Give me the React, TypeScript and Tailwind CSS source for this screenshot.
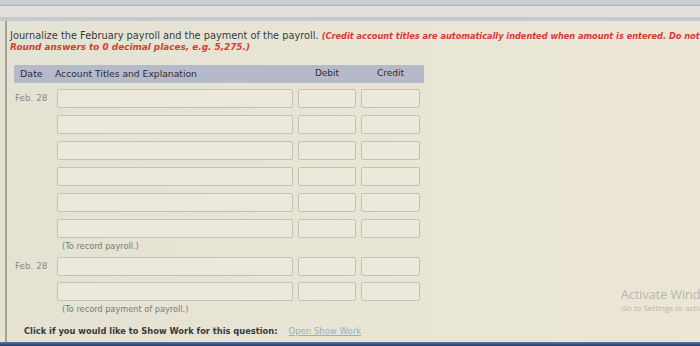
import React from 'react';

const FONT = { fontFamily: '"DejaVu Sans", Verdana, sans-serif' };

function Box({ w }: { w: string }) {
  return <div className={`h-[19px] ${w} rounded-[2px] border border-[#c3c2b8] bg-[#ebe9dc]`} />;
}

function EntryRow({ date }: { date?: string }) {
  return (
    <div className="grid grid-cols-[38px_236px_58px_59px] gap-x-[5px] items-center">
      <div className="pl-[1px] text-[8.8px] text-[#8a8a82]">{date}</div>
      <Box w="w-[236px]" />
      <Box w="w-[58px]" />
      <Box w="w-[59px]" />
    </div>
  );
}

function Note({ text }: { text: string }) {
  return (
    <div className="grid grid-cols-[38px_236px] gap-x-[5px] h-[14px] items-center">
      <div />
      <div className="pl-[5px] text-[8.2px] text-[#7a7a74] whitespace-nowrap">{text}</div>
    </div>
  );
}

export default function App() {
  return (
    <div
      className="relative w-[700px] h-[346px] overflow-hidden flex flex-col bg-gradient-to-r from-[#e4e2d3] via-[#e8e5d5] to-[#ebe6d6]"
      style={FONT}
    >
      {/* browser chrome strips */}
      <div className="h-[6px] bg-[#c9ccd3] border-b border-[#aeb2ba]" />
      <div className="h-[11px] bg-[#e2e1d9]" />
      <div className="h-[4px] bg-[#c6c9cf]" />

      <div className="flex-1 ml-[5px] border-l-[2px] border-[#a4a39c] pl-[3px] pt-[9px]">
        {/* instructions */}
        <div className="whitespace-nowrap text-[9.8px] leading-[11px] text-[#3a3a3a]">
          Journalize the February payroll and the payment of the payroll.{' '}
          <span className="text-[8.2px] font-bold italic text-[#d83a36]">
            (Credit account titles are automatically indented when amount is entered. Do not indent manually.
          </span>
        </div>
        <div className="whitespace-nowrap text-[8.9px] leading-[11px] font-bold italic text-[#d83a36]">
          Round answers to 0 decimal places, e.g. 5,275.)
        </div>

        {/* table */}
        <div className="ml-[4px] mt-[12px] w-[410px]">
          <div className="grid grid-cols-[38px_236px_58px_59px] gap-x-[5px] h-[18px] items-center bg-[#b5b9c9] text-[9px] text-[#2e2e36]">
            <div className="pl-[6px] text-[9.5px]">Date</div>
            <div className="-ml-[2px] text-[9.2px]">Account Titles and Explanation</div>
            <div className="text-center">Debit</div>
            <div className="text-center">Credit</div>
          </div>

          <div className="mt-[6px] flex flex-col gap-[7px]">
            <EntryRow date="Feb. 28" />
            <EntryRow />
            <EntryRow />
            <EntryRow />
            <EntryRow />
            <EntryRow />
          </div>
          <div className="mt-[1px]">
            <Note text="(To record payroll.)" />
          </div>
          <div className="mt-[4px] flex flex-col gap-[6px]">
            <EntryRow date="Feb. 28" />
            <EntryRow />
          </div>
          <div className="mt-[1px]">
            <Note text="(To record payment of payroll.)" />
          </div>
        </div>

        <div className="mt-[9px] pl-[14px] flex items-center gap-[11px] text-[8.3px] whitespace-nowrap">
          <span className="font-bold text-[#3a3a38]">Click if you would like to Show Work for this question:</span>
          <span className="underline text-[#8fb0d0] text-[8.5px]">Open Show Work</span>
        </div>
      </div>

      <div className="h-[4px] bg-gradient-to-b from-[#5a78a6] to-[#1e3b68]" />

      {/* OS watermark */}
      <div className="absolute left-[621px] top-[287px] whitespace-nowrap text-[#b7b6ae]">
        <div className="text-[12.5px] leading-[15px]" style={{ fontFamily: '"Open Sans", "Noto Sans", sans-serif' }}>
          Activate Windows
        </div>
        <div className="text-[8px] leading-[11px]" style={{ fontFamily: '"Open Sans", "Noto Sans", sans-serif' }}>
          Go to Settings to activate Windows.
        </div>
      </div>
    </div>
  );
}
